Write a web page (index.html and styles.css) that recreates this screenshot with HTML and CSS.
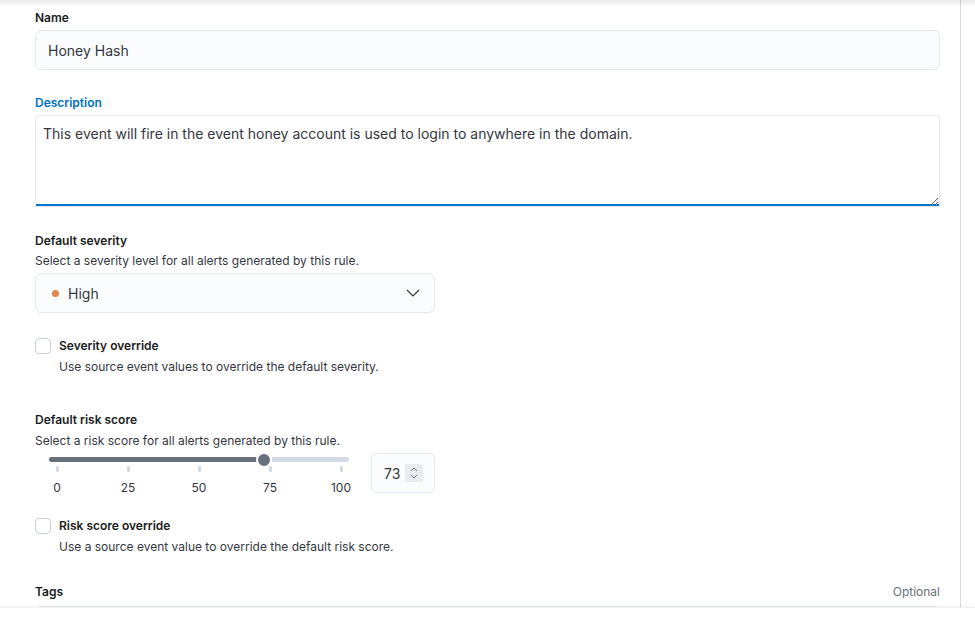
FILE: index.html
```html
<!DOCTYPE html>
<html>
<head>
    <meta charset="UTF-8">
    <title>Edit rule - About</title>
    <link rel="stylesheet" href="styles.css">
</head>
<body>

<div class="top-shade"></div>

<div class="panel">

    <div class="row first">
        <div class="label">Name</div>
        <div class="field name-field">Honey Hash</div>
    </div>

    <div class="row desc">
        <div class="label active">Description</div>
        <textarea class="field area">This event will fire in the event honey account is used to login to anywhere in the domain.</textarea>
    </div>

    <div class="row section">
        <div class="label">Default severity</div>
        <div class="help">Select a severity level for all alerts generated by this rule.</div>
        <div class="field select">
            <span class="dot"></span>
            <span class="select-value">High</span>
            <svg class="chev" width="14" height="8" viewBox="0 0 14 8">
                <path d="M1 1l6 6 6-6" fill="none" stroke="#343741" stroke-width="1.2"/>
            </svg>
        </div>
    </div>

    <div class="check-row">
        <span class="box"></span>
        <div>
            <div class="check-label">Severity override</div>
            <div class="check-desc">Use source event values to override the default severity.</div>
        </div>
    </div>

    <div class="row section risk">
        <div class="label">Default risk score</div>
        <div class="help">Select a risk score for all alerts generated by this rule.</div>
        <div class="range-row">
            <div class="range">
                <div class="track">
                    <div class="track-fill"></div>
                    <div class="thumb"></div>
                </div>
                <div class="ticks">
                    <div class="tick"><i></i><span>0</span></div>
                    <div class="tick"><i></i><span>25</span></div>
                    <div class="tick"><i></i><span>50</span></div>
                    <div class="tick"><i></i><span>75</span></div>
                    <div class="tick"><i></i><span>100</span></div>
                </div>
            </div>
            <div class="field number">
                <span>73</span>
                <span class="spin">
                    <svg width="10" height="14" viewBox="0 0 10 14">
                        <path d="M2 5l3-3 3 3M2 9l3 3 3-3" fill="none" stroke="#69707d" stroke-width="1"/>
                    </svg>
                </span>
            </div>
        </div>
    </div>

    <div class="check-row after-range">
        <span class="box"></span>
        <div>
            <div class="check-label">Risk score override</div>
            <div class="check-desc">Use a source event value to override the default risk score.</div>
        </div>
    </div>

    <div class="row tags">
        <div class="label-line">
            <div class="label">Tags</div>
            <div class="optional">Optional</div>
        </div>
        <div class="field tags-field"></div>
    </div>

</div>

<div class="bottom-bar"></div>

</body>
</html>
```

FILE: styles.css
```css
html, body {
    margin: 0;
    padding: 0;
    height: 100%;
    overflow: hidden;
    background: #ffffff;
    font-family: Inter, "Noto Sans", sans-serif;
    color: #343741;
}

.top-shade {
    position: fixed;
    top: 0;
    left: 0;
    right: 0;
    height: 7px;
    background: linear-gradient(rgba(0, 0, 0, 0.09), rgba(0, 0, 0, 0));
    z-index: 2;
}

.bottom-bar {
    position: fixed;
    left: 0;
    right: 0;
    bottom: 0;
    height: 17px;
    background: #ffffff;
    border-top: 1px solid #eef0f4;
    box-shadow: 0 -1px 3px rgba(0, 0, 0, 0.05);
    z-index: 2;
}

.panel {
    box-sizing: border-box;
    width: 961px;
    height: 625px;
    padding: 9px 20px 0 35px;
    border-right: 1px solid #d3dae6;
}

.row {
    margin-top: 23px;
}

.row.first {
    margin-top: 0;
}

.row.desc {
    margin-top: 24px;
}

.row.section {
    margin-top: 25px;
}

.row.risk {
    margin-top: 35px;
}

.label {
    font-size: 12px;
    line-height: 18px;
    font-weight: 600;
    color: #1a1c21;
    margin-bottom: 3px;
}

.label.active {
    color: #0071c2;
}

.help {
    font-size: 12px;
    line-height: 18px;
    margin-top: -1px;
    margin-bottom: 3px;
    color: #343741;
}

.risk .help {
    margin-top: 0;
    margin-bottom: 3px;
}

.field {
    box-sizing: border-box;
    height: 40px;
    background: #fbfcfd;
    border: 1px solid #e4e8f0;
    border-radius: 6px;
    font-size: 14px;
    color: #343741;
}

.name-field {
    display: flex;
    align-items: center;
    padding: 0 12px;
}

.area {
    display: block;
    width: 100%;
    height: 92px;
    padding: 8px 7px;
    margin: 0;
    background: #ffffff;
    font-family: inherit;
    line-height: 20px;
    resize: vertical;
    outline: none;
    border-radius: 4px 4px 0 0;
    box-shadow: inset 0 -2px 0 #0077cc;
}

.select {
    width: 400px;
    display: flex;
    align-items: center;
    padding: 0 14px 0 16px;
}

.dot {
    width: 7px;
    height: 7px;
    border-radius: 50%;
    background: #e4874b;
    margin-right: 9px;
}

.select-value {
    flex: 1;
}

.check-row {
    display: flex;
    margin-top: 24px;
}

.check-row.after-range {
    margin-top: 20px;
}

.box {
    box-sizing: border-box;
    width: 16px;
    height: 16px;
    margin-top: 1px;
    margin-right: 8px;
    border: 1px solid #c9cfd8;
    border-radius: 4px;
    background: #ffffff;
}

.check-label {
    font-size: 12px;
    line-height: 18px;
    font-weight: 600;
    color: #1a1c21;
}

.check-desc {
    font-size: 12px;
    line-height: 18px;
    margin-top: 3px;
}

.range-row {
    display: flex;
    align-items: flex-start;
    gap: 15px;
}

.range {
    width: 321px;
}

.track {
    position: relative;
    margin: 4px 0 0 14px;
    width: 300px;
    height: 5px;
    border-radius: 3px;
    background: #d3dae6;
}

.track-fill {
    position: absolute;
    left: 0;
    top: 0;
    bottom: 0;
    width: 215px;
    border-radius: 3px;
    background: #69707d;
}

.thumb {
    position: absolute;
    left: 208px;
    top: -5px;
    width: 12px;
    height: 12px;
    border-radius: 50%;
    background: #69707d;
    border: 2px solid #ffffff;
    margin-left: -1px;
}

.ticks {
    display: flex;
    justify-content: space-between;
    width: 314px;
    margin: 4px 0 0 7px;
}

.tick {
    width: 30px;
    display: flex;
    flex-direction: column;
    align-items: center;
}

.tick i {
    width: 3px;
    height: 6px;
    border-radius: 1px;
    background: #d3dae6;
}

.tick span {
    font-size: 12px;
    line-height: 18px;
    margin-top: 7px;
    color: #343741;
}

.number {
    width: 64px;
    display: flex;
    align-items: center;
    padding: 0 11px 0 12px;
    justify-content: space-between;
}

.spin {
    width: 18px;
    height: 18px;
    background: #e9ecf1;
    display: flex;
    align-items: center;
    justify-content: center;
}

.row.tags {
    margin-top: 27px;
}

.label-line {
    display: flex;
    justify-content: space-between;
    align-items: baseline;
}

.optional {
    font-size: 12px;
    color: #69707d;
}

.tags-field {
    margin-top: 2px;
}
```
